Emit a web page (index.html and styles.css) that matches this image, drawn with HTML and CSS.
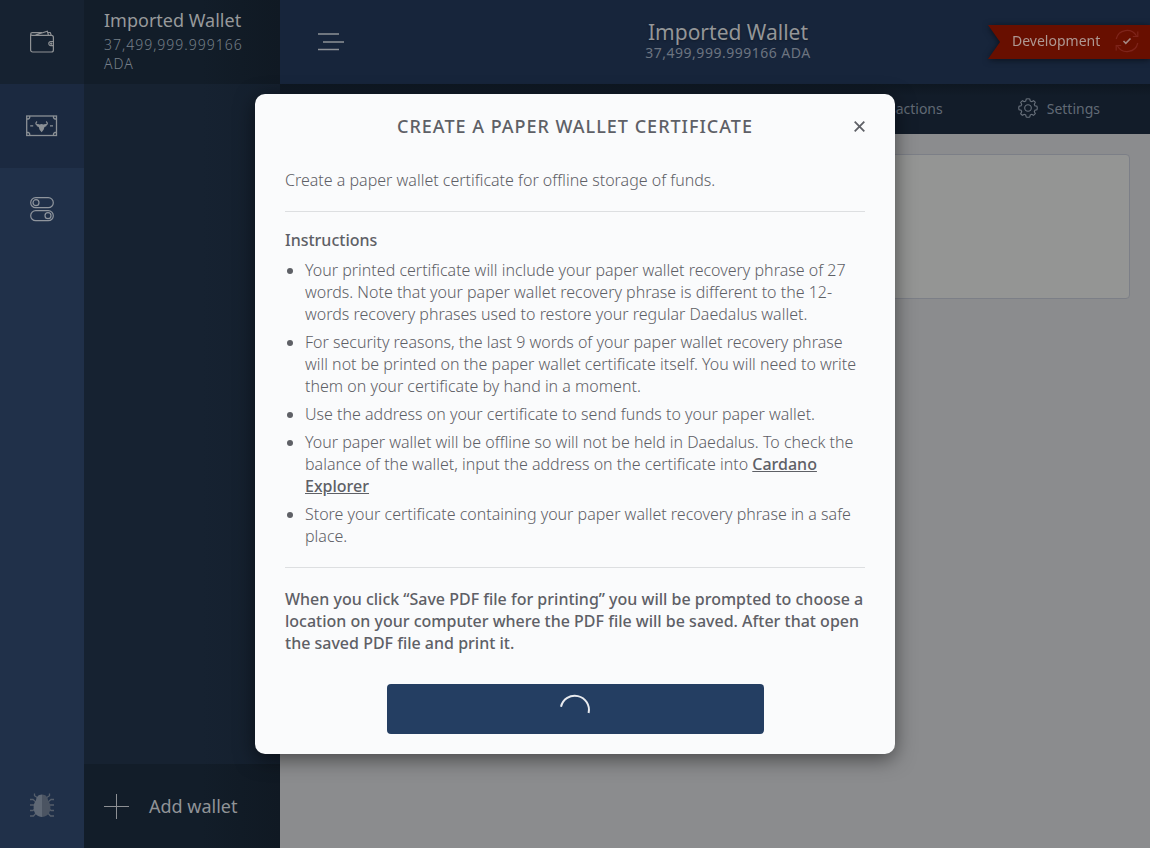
FILE: index.html
```html
<!DOCTYPE html>
<html lang="en">
<head>
<meta charset="utf-8">
<title>Daedalus</title>
<link rel="stylesheet" href="styles.css">
</head>
<body>
<div class="app">
  <nav class="rail">
    <div class="rail-item rail-wallets">
      <svg width="26" height="24" viewBox="0 0 26 24" fill="none" stroke="#8f9295" stroke-width="1.2"><path d="M1.6 4.500V20a2 2 0 0 0 2 2h18.800a2 2 0 0 0 2-2V7.400a2 2 0 0 0-2-2H3.200C1.200 5.400 1.200 2.600 3.200 2.600H13M6.500 5 18.300 1.300l1.200 3.900M18.800 2.500h2.400l1.200 2.900M24.400 11.500h-2.500a2.100 2.100 0 0 0 0 4.200h2.500"/><circle cx="22.200" cy="13.600" r=".6"/></svg>
    </div>
    <div class="rail-item rail-certificate">
      <svg width="32" height="22" viewBox="0 0 32 22" fill="none" stroke="#8b9095" stroke-width="1.3"><rect x=".7" y="1" width="29.800" height="19.500"/><path d="M.7 4h1.500A2 2 0 0 0 3.700 2.500V1M27.500 1v1.500A2 2 0 0 0 29 4h1.500M.7 17.500h1.500A2 2 0 0 1 3.700 19v1.500M27.500 20.500V19a2 2 0 0 1 1.500-1.500h1.500M4.200 10.800h3M24 10.800h3"/><path d="M11 6.500C8.600 8.800 10.300 10.200 12.800 10M20.200 6.500c2.400 2.300.7 3.700-1.800 3.500"/><path fill="#8b9095" stroke="none" d="M10.400 9 13.500 9.500l2-.5 2 .5 3.300-.5-.5 2.200-1.800.8-.9 2.700-2 2.500-2-2.500-.9-2.700-1.800-.8z"/></svg>
    </div>
    <div class="rail-item rail-settings">
      <svg width="26" height="26" viewBox="0 0 26 26" fill="none" stroke="#8f959d" stroke-width="1.2"><rect x="1.700" y="1.700" width="22.600" height="10" rx="5"/><circle cx="7" cy="6.700" r="3"/><rect x="1.700" y="14.700" width="22.600" height="10" rx="5"/><circle cx="19" cy="19.700" r="3"/></svg>
    </div>
    <div class="rail-item rail-bug">
      <svg width="26" height="26" viewBox="0 0 26 26" fill="none"><path stroke="#555e6b" stroke-width="1.300" d="M5.500 1.500v2.200L9 6M20.500 1.500v2.200L17 6M1 7.500h3L7 10M25 7.500h-3L19 10M1 13h6M19 13h6M1 18.500h3L7 16M25 18.500h-3L19 16M1 24h3.500L8 20M25 24h-3.500L18 20"/><path fill="#5f6875" d="M13 2.500c-4 0-6 3-6 6C5 11 4.600 13 4.600 15.500c0 6 3.800 9.500 8.400 9.500z"/><path fill="#4b5462" d="M13 2.500c4 0 6 3 6 6 2 2.500 2.400 4.500 2.400 7 0 6-3.800 9.500-8.400 9.500z"/></svg>
    </div>
  </nav>
  <aside class="wallets">
    <div class="wallet">
      <div class="wallet-name">Imported Wallet</div>
      <div class="wallet-amount">37,499,999.999166 ADA</div>
    </div>
    <div class="add">
      <svg width="25" height="25" viewBox="0 0 25 25" stroke="#8d9094"><path d="M0 12.500h25M12.500 0v25"/></svg>
      <span>Add wallet</span>
    </div>
  </aside>
  <main class="main">
    <header class="topbar">
      <svg class="menu-icon" width="26" height="18" viewBox="0 0 26 18" stroke="#8d9196" stroke-width="1.300"><path d="M0 1h21M5 9h21M0 16.500h21"/></svg>
      <div class="top-title">
        <div class="top-name">Imported Wallet</div>
        <div class="top-amount">37,499,999.999166 ADA</div>
      </div>
      <div class="ribbon-shadow"><div class="ribbon">
        <span>Development</span>
        <svg width="24" height="24" viewBox="0 0 24 24" fill="none" stroke="#7e241a" stroke-width="1.200"><path d="M1.200 10A11 11 0 0 1 21.500 7M22.800 2.500v5h-5M22.800 14A11 11 0 0 1 2.500 17M1.200 21.500v-5h5"/><path stroke="#a38983" stroke-width="1.600" d="m8.500 12 2.300 2.300L15.500 9.500"/></svg>
      </div></div>
    </header>
    <div class="tabs">
      <span class="tab tab-transactions">Transactions</span>
      <span class="tab tab-settings">
        <svg width="20" height="20" viewBox="-10 -10 20 20" fill="none" stroke="#69717c" stroke-width="1.100"><circle r="3.300"/><path d="M-1.800-8.900Q0-9.600 1.800-8.900L2.300-6.900 3.800-6.300 5.500-7.300Q7.200-6.300 7.300-5.500L6.300-3.800 6.900-2.300 8.900-1.800Q9.600 0 8.900 1.800L6.900 2.300 6.300 3.800 7.300 5.500Q6.500 7 5.500 7.300L3.800 6.300 2.300 6.900 1.800 8.900Q0 9.600-1.800 8.900L-2.300 6.900-3.800 6.300-5.500 7.300Q-7 6.500-7.300 5.500L-6.300 3.800-6.900 2.300-8.900 1.800Q-9.600 0-8.900-1.800L-6.900-2.300-6.300-3.800-7.300-5.500Q-6.500-7-5.500-7.300L-3.800-6.300-2.300-6.900Z"/></svg>
        Settings
      </span>
    </div>
    <div class="content"><div class="card"></div></div>
  </main>
</div>
<div class="overlay">
  <section class="dialog">
    <h1>Create a paper wallet certificate</h1>
    <svg class="close" width="11" height="11" viewBox="0 0 11 11" stroke="#5e6066" stroke-width="1.800"><path d="m.7.7 9.600 9.600M10.300.7.7 10.300"/></svg>
    <p class="intro">Create a paper wallet certificate for offline storage of funds.</p>
    <div class="instructions">
      <h2>Instructions</h2>
      <ul>
        <li>Your printed certificate will include your paper wallet recovery phrase of 27<br>words. Note that your paper wallet recovery phrase is different to the 12-<br>words recovery phrases used to restore your regular Daedalus wallet.</li>
        <li>For security reasons, the last 9 words of your paper wallet recovery phrase<br>will not be printed on the paper wallet certificate itself. You will need to write<br>them on your certificate by hand in a moment.</li>
        <li>Use the address on your certificate to send funds to your paper wallet.</li>
        <li>Your paper wallet will be offline so will not be held in Daedalus. To check the<br>balance of the wallet, input the address on the certificate into <a>Cardano<br>Explorer</a></li>
        <li>Store your certificate containing your paper wallet recovery phrase in a safe<br>place.</li>
      </ul>
    </div>
    <p class="note">When you click “Save PDF file for printing” you will be prompted to choose a<br>location on your computer where the PDF file will be saved. After that open<br>the saved PDF file and print it.</p>
    <div class="button">
      <svg width="32" height="32" viewBox="0 0 32 32" fill="none" stroke="#e9ebef" stroke-width="2"><path d="M2 13.800A14 14 0 0 1 29.600 20"/></svg>
    </div>
  </section>
</div>
</body>
</html>
```
FILE: styles.css
```css
* { box-sizing: border-box; }
body { margin: 0; font-family: "Noto Sans", sans-serif; overflow: hidden; }
h1, h2, p, ul { margin: 0; padding: 0; }
svg { display: block; flex: none; }
.app { display: flex; width: 1150px; height: 848px; }
.rail { width: 84px; background: #203049; display: flex; flex-direction: column; }
.rail-item { height: 84px; display: flex; align-items: center; justify-content: center; }
.rail-wallets { background: #162231; padding-bottom: 1px; }
.rail-certificate { background: #1b2940; }
.rail-settings, .rail-bug { padding-bottom: 2px; }
.rail-bug { margin-top: auto; }
.wallets { width: 196px; background: linear-gradient(90deg, #162231 60%, #141f2d); display: flex; flex-direction: column; justify-content: space-between; white-space: nowrap; }
.wallet { height: 84px; padding: 8px 20px 0; background: linear-gradient(90deg, #121d29 60%, #101923); }
.wallet-name { font-size: 18px; line-height: 24px; color: #97999b; }
.wallet-amount { font-size: 14px; line-height: 19px; margin-top: 2.5px; letter-spacing: 1px; font-weight: 300; color: #77808a; white-space: normal; }
.add { height: 84px; padding-left: 20px; background: linear-gradient(90deg, #121d29 60%, #101923); display: flex; align-items: center; gap: 20px; font-size: 18px; color: #909397; }
.main { flex: 1; display: flex; flex-direction: column; background: #8b8c8e; }
.topbar { height: 84px; background: #17253b; display: grid; grid-template-columns: 327px 166px 1fr; align-items: center; padding-left: 38px; }
.menu-icon { margin-top: -1px; }
.top-title { text-align: center; white-space: nowrap; padding-bottom: 4px; }
.top-name { font-size: 21px; line-height: 25px; color: #949698; text-shadow: 0 1px 2px #101a29; }
.top-amount { font-size: 14px; line-height: 14px; margin-top: 1px; letter-spacing: .5px; color: #6c7480; }
.ribbon-shadow { justify-self: end; filter: drop-shadow(0 1px 3px #09111c); }
.ribbon { width: 162px; height: 34px; background: #680f00; clip-path: polygon(0 0, 100% 0, 100% 100%, 0 100%, 12px 50%); display: flex; align-items: center; justify-content: space-between; padding: 0 11px 3px 24px; font-size: 14px; color: #ae9892; }
.tabs { height: 50px; background: linear-gradient(#0e1721, #121c29 12px); display: flex; justify-content: flex-end; align-items: center; padding: 0 50px 2px 0; gap: 75px; font-size: 14px; color: #616a75; }
.tab { display: flex; align-items: center; gap: 9px; }
.content { padding: 20px; }
.card { height: 145px; background: #949594; border: 1px solid #7c7f87; border-radius: 4px; }
.overlay { position: absolute; inset: 0; width: 1150px; height: 848px; display: flex; align-items: center; justify-content: center; }
.dialog { position: relative; width: 640px; height: 660px; padding: 20px 30px; background: #fafbfc; border-radius: 10px; box-shadow: 0 5px 20px rgba(0,0,0,.5); color: #5e6066; font-size: 16px; line-height: 22px; font-weight: 300; white-space: nowrap; }
h1 { font-size: 18px; line-height: 25px; font-weight: 500; letter-spacing: 1px; text-align: center; text-transform: uppercase; }
.close { position: absolute; top: 27px; right: 30px; }
.intro { margin-top: 30px; padding-bottom: 20px; }
.instructions { border: 1px solid #dddfe1; border-width: 1px 0; padding: 17px 0 20px; }
h2 { font-size: 16px; line-height: 22px; font-weight: 500; margin-bottom: 8px; }
ul { padding-left: 20px; }
li { margin-bottom: 6px; }
li:last-child { margin-bottom: 0; }
a { font-weight: 500; text-decoration: underline; }
.note { margin-top: 20px; font-weight: 500; }
.button { width: 377px; height: 50px; margin: 30px auto 0; border-radius: 4px; background: #243e62; display: flex; justify-content: center; align-items: center; padding-bottom: 1px; }
```
